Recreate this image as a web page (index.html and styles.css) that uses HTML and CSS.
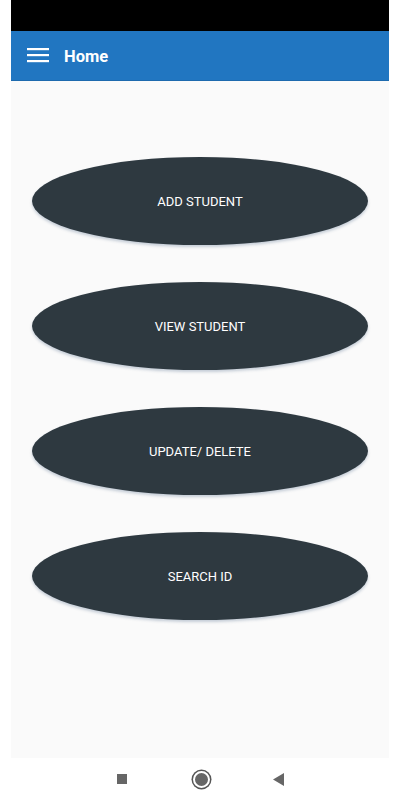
FILE: index.html
```html
<!DOCTYPE html>
<html lang="en">
<head>
  <meta charset="UTF-8" />
  <meta name="viewport" content="width=device-width, initial-scale=1.0" />
  <title>Home</title>
  <link rel="stylesheet" href="styles.css">
</head>
<body>
  <div class="phone">
    <div class="status-bar"></div>

    <header class="app-bar">
      <span class="menu-icon">
        <svg width="22" height="15" viewBox="0 0 22 15">
          <rect x="0" y="0" width="22" height="2.2" fill="#fff" />
          <rect x="0" y="6" width="22" height="2.2" fill="#fff" />
          <rect x="0" y="12" width="22" height="2.2" fill="#fff" />
        </svg>
      </span>
      <h1 class="title">Home</h1>
    </header>

    <main class="content">
      <button class="oval-btn">ADD STUDENT</button>
      <button class="oval-btn">VIEW STUDENT</button>
      <button class="oval-btn">UPDATE/ DELETE</button>
      <button class="oval-btn">SEARCH ID</button>
    </main>

    <nav class="nav-bar">
      <span class="nav-square"></span>
      <span class="nav-home"></span>
      <svg class="nav-back" width="11" height="13" viewBox="0 0 11 13">
        <polygon points="11,0 11,13 0,6.5" fill="#666" />
      </svg>
    </nav>
  </div>
</body>
</html>
```

FILE: styles.css
```css
body {
  margin: 0;
  background: #fff;
  font-family: Roboto, "Liberation Sans", sans-serif;
}

.phone {
  width: 378px;
  margin-left: 11px;
}

.status-bar {
  height: 31px;
  background: #000;
}

.app-bar {
  display: flex;
  align-items: center;
  height: 49px;
  background: #2176c1;
  border-bottom: 1px solid #1d6aae;
  color: #fff;
}

.menu-icon {
  display: flex;
  margin-left: 16px;
}

.title {
  margin: 2px 0 0 15px;
  font-size: 16.5px;
  font-weight: bold;
}

.content {
  display: flex;
  flex-direction: column;
  align-items: center;
  gap: 37px;
  height: 601px;
  padding-top: 76px;
  background: #fafafa;
}

.oval-btn {
  width: 336px;
  height: 88px;
  border: none;
  border-radius: 50%;
  background: #2e3940;
  color: #fff;
  font-family: Roboto, "Liberation Sans", sans-serif;
  font-size: 13px;
  font-weight: normal;
  box-shadow: 0 2px 3px rgba(40, 70, 110, 0.25);
  cursor: pointer;
}

.nav-bar {
  display: flex;
  align-items: center;
  justify-content: center;
  height: 42px;
}

.nav-square {
  width: 10px;
  height: 10px;
  margin-right: 66px;
  background: #666;
}

.nav-home {
  width: 13px;
  height: 13px;
  margin-right: 63px;
  border-radius: 50%;
  background: #666;
  border: 2px solid #fff;
  box-shadow: 0 0 0 1.5px #555;
}

.nav-back {
  display: block;
}
```
